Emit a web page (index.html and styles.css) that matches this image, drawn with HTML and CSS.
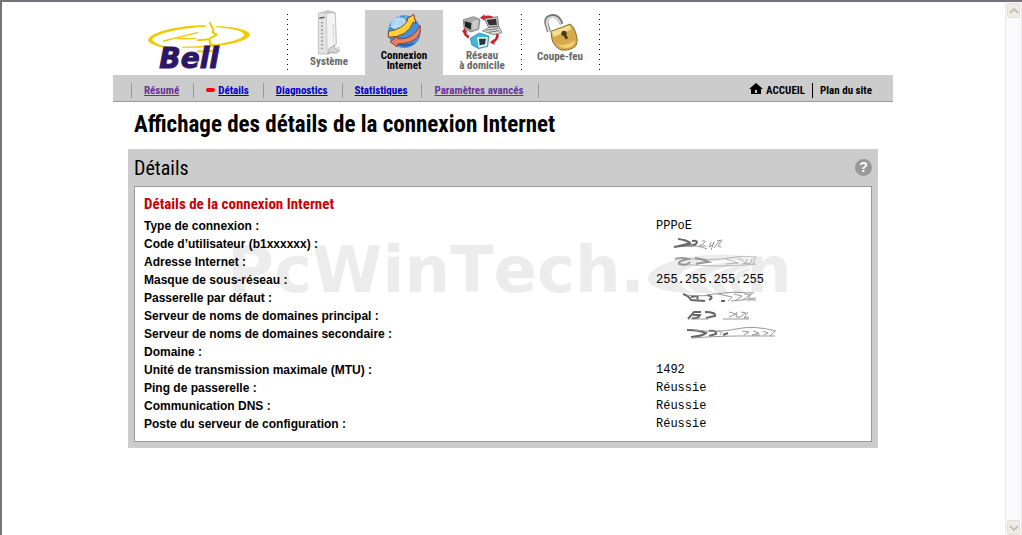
FILE: index.html
```html
<!DOCTYPE html>
<html lang="fr">
<head>
    <meta charset="UTF-8">
    <meta name="viewport" content="width=device-width, initial-scale=1.0">
    <title>Affichage des détails de la connexion Internet</title>
    <link rel="stylesheet" href="styles.css">
</head>
<body>

    <div class="page">
        <div class="container">
            <header class="top">
                <a href="#" class="logo" aria-label="Bell">
                    <svg width="107" height="50" viewBox="110 60 321 150">
                        <g fill="#edcb00">
                            <path d="M208 149 C160 147 113 133 113 119 C124 93 220 75 286 76 L286 81 C225 82 140 98 126 118 C128 132 168 142 208 145Z"/>
                            <path d="M318 78 C370 80 419 90 419 104 C410 130 300 146 214 143 L214 140 C300 140 394 124 402 105 C400 92 360 85 318 82Z"/>
                        </g>
                        <g fill="none" stroke="#edcb00" stroke-linecap="round" stroke-linejoin="round">
                            <path stroke-width="4" d="M160 123 L262 98 M202 116 L255 116"/>
                            <path stroke-width="6" d="M299 69 L309 90 L307 97 L319 104 L298 116 M262 121 L297 118 L300 132 L322 141 C322 151 305 157 262 154"/>
                        </g>
                        <text x="147" y="203" class="logo-text">Bell</text>
                    </svg>
                </a>
                <nav class="tabs">
                    <a href="#" class="tab tall">
                        <svg width="24" height="46" viewBox="115 28 72 138">
                            <path d="M140 158 L182 136 L184 150 L166 160Z" fill="#ddd"/>
                            <path d="M119 38 L148 30 L170 36 L173 130 L150 160 L119 160Z" fill="#e2e2e2" stroke="#aaa" stroke-width="2"/>
                            <path d="M143 36 L170 38 L172 128 L146 160Z" fill="#f3f3f3" stroke="#bbb" stroke-width="2"/>
                            <path d="M121 38 L148 30 L170 36 L143 39Z" fill="#c4c4c4"/>
                            <path d="M122 52 L138 50" stroke="#555" stroke-width="4"/>
                            <path d="M130 64 V152" stroke="#888" stroke-width="5" stroke-dasharray="4 7"/>
                            <path d="M164 70 V125" stroke="#ddd" stroke-width="4"/>
                            <path d="M148 160 L151 144 L166 134 L168 144 L182 152 L172 158 L160 153Z" fill="#d5d5d5" stroke="#999" stroke-width="2"/>
                        </svg>
                        <span>Système</span>
                    </a>
                    <a href="#" class="tab active">
                        <svg width="35" height="36" viewBox="318 42 105 108">
                            <circle cx="370" cy="95" r="49" fill="#4390dc"/>
                            <ellipse cx="356" cy="72" rx="27" ry="20" fill="#a9d4f8"/>
                            <path d="M340 56 Q365 66 398 56 M324 80 Q360 75 390 80 M356 48 Q335 85 345 120 M376 47 Q368 70 371 80" fill="none" stroke="#d8edff" stroke-width="2"/>
                            <path d="M340 130 Q375 150 403 128 Q380 135 340 130" fill="#2366b2"/>
                            <path d="M322 94 Q365 88 381 60 L373 60 L398 43 L405 70 L397 66 Q380 112 322 112Z" fill="#ffce38" stroke="#764b22" stroke-width="3"/>
                            <path d="M417 75 Q427 128 350 132 L348 141 L327 125 L351 109 L351 117 Q400 118 417 75Z" fill="#e9815f" stroke="#8e3e35" stroke-width="3"/>
                        </svg>
                        <span>Connexion<br>Internet</span>
                    </a>
                    <a href="#" class="tab plain">
                        <svg width="41" height="36" viewBox="62 40 123 108">
                            <g fill="none" stroke="#c7262d" stroke-width="8">
                                <path d="M154 51 Q139 46 128 51"/>
                                <path d="M69 89 Q69 104 83 110"/>
                                <path d="M168 100 Q171 116 151 126"/>
                            </g>
                            <path d="M116 51 L130 41 L130 60Z M62 94 L69 82 L80 96Z M146 126 L157 115 L160 132Z" fill="#c7262d"/>
                            <path d="M66 57 L96 48 L116 56 L112 86 L88 94 L68 82Z" fill="#aaa" stroke="#666" stroke-width="2"/>
                            <path d="M70 62 L90 67 L88 87 L71 78Z" fill="#222"/>
                            <path d="M93 62 L111 57 L109 83 L93 88Z" fill="#ccc"/>
                            <path d="M130 54 L169 48 L172 77 L141 80Z" fill="#c9c9c9" stroke="#555" stroke-width="2"/>
                            <path d="M136 58 L164 54 L167 73 L143 74Z" fill="#333"/>
                            <path d="M141 81 L173 78 L182 96 L156 102 L124 91Z" fill="#ddd" stroke="#555" stroke-width="2"/>
                            <path d="M134 89 L170 84 M142 95 L174 90" stroke="#777" stroke-width="3"/>
                            <path d="M87 113 L114 97 L143 106 L139 137 L112 144 L91 132Z" fill="#40b7dc" stroke="#1d7595" stroke-width="2"/>
                            <path d="M107 109 L139 109 L137 135 L112 141Z" fill="#e4f4f8"/>
                            <path d="M113 114 L134 114 L131 131 L115 134Z" fill="#223743"/>
                        </svg>
                        <span>Réseau<br>à domicile</span>
                    </a>
                    <a href="#" class="tab">
                        <svg width="35" height="37" viewBox="308 38 105 111">
                            <path d="M326 91 L318 65 Q316 47 336 44 Q353 42 364 68" fill="none" stroke="#777" stroke-width="12"/>
                            <path d="M326 91 L319 65 Q318 50 336 47 Q351 45 361 67" fill="none" stroke="#ddd" stroke-width="6"/>
                            <path d="M332 90 L390 68 Q406 82 410 112 Q412 132 400 139 Q376 151 358 144 Q332 130 332 90Z" fill="#d4aa4d" stroke="#8d6a2c" stroke-width="3"/>
                            <path d="M334 91 L387 72 Q391 77 394 84 L340 107Z" fill="#f4dd91"/>
                            <path d="M349 128 Q378 137 404 117 Q402 133 388 138 Q368 144 349 128Z" fill="#f1d174"/>
                            <circle cx="371" cy="96" r="8" fill="#49391f"/>
                            <path d="M371 98 L380 112" stroke="#49391f" stroke-width="8"/>
                        </svg>
                        <span>Coupe-feu</span>
                    </a>
                </nav>
            </header>

            <div class="subnav">
                <ul>
                    <li><a href="#" class="visited">Résumé</a></li>
                    <li class="current"><a href="#">Détails</a></li>
                    <li><a href="#">Diagnostics</a></li>
                    <li><a href="#">Statistiques</a></li>
                    <li><a href="#" class="visited">Paramètres avancés</a></li>
                </ul>
                <div class="tools">
                    <a href="#">
                        <svg width="14" height="12" viewBox="0 0 14 12"><path fill-rule="evenodd" d="M7 0 L14 6 H12 V11 H2 V6 H0Z M6 7 V10 H8 V7Z"/></svg>
                        ACCUEIL
                    </a>
                    <a href="#">Plan du site</a>
                </div>
            </div>

            <main>
                <h1>Affichage des détails de la connexion Internet</h1>
                <section class="panel">
                    <div class="panel-head">
                        <h2>Détails</h2>
                        <button type="button" class="help" aria-label="Aide">?</button>
                    </div>
                    <div class="panel-body">
                        <h3>Détails de la connexion Internet</h3>
                        <table>
                            <tr><th scope="row">Type de connexion :</th><td>PPPoE</td></tr>
                            <tr>
                                <th scope="row">Code d’utilisateur (b1xxxxxx) :</th>
                                <td>
                                    <svg class="scribble" width="130" height="14" viewBox="0 0 130 14">
                                        <path class="heavy" d="M22 2 Q31 3 34 6 Q29 8 18 10 Q32 8 40 8 M36 4 Q43 3 40 7 L35 9"/>
                                        <path d="M30 9 Q42 8 51 12 M46 4 Q52 3 47 7 L43 9 H50 M55 5 L53 10 Q58 8 58 5 L55 13 M64 3 L58 11 M61 4 L66 3 L62 9 L65 10"/>
                                    </svg>
                                </td>
                            </tr>
                            <tr>
                                <th scope="row">Adresse Internet :</th>
                                <td>
                                    <svg class="scribble" width="130" height="14" viewBox="0 0 130 14">
                                        <path class="heavy faded" d="M19 4 Q26 2 32 4 Q22 6 23 9 Q31 11 34 7 M39 3 Q47 4 53 7 Q43 8 40 9"/>
                                        <path class="faded" d="M25 3 Q58 6 72 3 T101 2 M24 9 Q60 13 100 9 M70 4 L82 8 L70 9 M82 3 L90 8 L86 9 M91 4 L90 9 L95 8 L96 4 M99 3 L97 10"/>
                                    </svg>
                                </td>
                            </tr>
                            <tr><th scope="row">Masque de sous-réseau :</th><td>255.255.255.255</td></tr>
                            <tr>
                                <th scope="row">Passerelle par défaut :</th>
                                <td>
                                    <svg class="scribble" width="130" height="14" viewBox="0 0 130 14">
                                        <path class="heavy" d="M27 3 Q33 5 35 9 L49 10 M35 6 Q44 4 41 8 M51 4 Q59 6 53 9 M65 10 H69"/>
                                        <path d="M31 4 Q48 6 58 3 Q78 0 98 2 M62 3 L76 6 L72 10 M78 3 L86 5 L79 10 M88 3 L94 4 L87 9 M96 2 L92 8 L100 7 M75 10 Q89 8 100 9"/>
                                    </svg>
                                </td>
                            </tr>
                            <tr>
                                <th scope="row">Serveur de noms de domaines principal :</th>
                                <td>
                                    <svg class="scribble" width="130" height="14" viewBox="0 0 130 14">
                                        <path class="heavy" d="M32 10 L38 3 L45 3 M37 6 H44 Q42 10 36 9 M49 3 Q60 3 59 7 L50 9"/>
                                        <path d="M35 10 H52 M67 10 H93 M73 3 L80 5 L73 8 M81 3 L80 8 H84 M85 3 L90 4 L84 8 M92 3 L88 9 L93 8"/>
                                    </svg>
                                </td>
                            </tr>
                            <tr>
                                <th scope="row">Serveur de noms de domaines secondaire :</th>
                                <td>
                                    <svg class="scribble" width="130" height="14" viewBox="0 0 130 14">
                                        <path class="heavy" d="M31 3 Q43 3 50 6 Q47 9 35 10 M53 4 Q61 3 60 7 L53 9 M72 6 L67 8"/>
                                        <path d="M38 3 Q62 6 80 2 T120 4 M35 11 Q65 9 83 9 T119 9 M61 4 Q68 4 64 8 M86 4 L93 5 L88 8 M97 4 L103 6 L96 8 H104 M107 4 L112 6 L108 8 M119 4 L114 9"/>
                                    </svg>
                                </td>
                            </tr>
                            <tr><th scope="row">Domaine :</th><td></td></tr>
                            <tr><th scope="row">Unité de transmission maximale (MTU) :</th><td>1492</td></tr>
                            <tr><th scope="row">Ping de passerelle :</th><td>Réussie</td></tr>
                            <tr><th scope="row">Communication DNS :</th><td>Réussie</td></tr>
                            <tr><th scope="row">Poste du serveur de configuration :</th><td>Réussie</td></tr>
                        </table>
                    </div>
                </section>
            </main>
        </div>
    </div>

    <!-- Disabled scrollbar -->
    <div class="scrollbar">
        <button type="button" disabled aria-label="Haut">
            <svg width="10" height="6" viewBox="0 0 10 6"><path d="M1 5 L5 1 L9 5"/></svg>
        </button>
        <button type="button" disabled aria-label="Bas">
            <svg width="10" height="6" viewBox="0 0 10 6"><path d="M1 1 L5 5 L9 1"/></svg>
        </button>
    </div>

    <!-- Watermark -->
    <div class="watermark">
        <svg width="562" height="52" viewBox="0 0 562 52">
            <text x="-3" y="50">PcWinTech.</text>
            <path d="M530 20 C510 10 480 12 460 15 C435 19 418 28 418 37 C419 46 438 51 463 51 H520 V24Z"/>
            <g class="gaps">
                <path d="M520 20 C485 15 452 24 448 36 C448 43 455 48 466 51 C458 45 455 38 460 32 C467 24 490 19 520 20Z"/>
                <path d="M522 22 C495 22 472 32 472 41 C473 46 480 49 487 51 C482 46 479 41 483 36 C488 28 505 23 522 22Z"/>
                <path d="M524 24 C507 26 491 36 492 43 L499 51 H505 C500 45 499 41 503 36 C507 30 515 26 524 24Z"/>
                <path d="M524 26 C513 31 507 38 509 44 L514 52 H524Z"/>
            </g>
            <text x="516" y="50">n</text>
        </svg>
    </div>

</body>
</html>
```

FILE: styles.css
```css
* {
    box-sizing: border-box;
}

body {
    margin: 0;
    min-height: 100vh;
    display: flex;
    font-family: "Liberation Sans", Arial, sans-serif;
    font-size: 12px;
    color: #000;
    background: #fff;
    border-top: 2px solid #747278;
    border-left: 2px solid #747278;
}

h1, h2, h3 {
    margin: 0;
}

h1, h2, h3, .tab, .subnav {
    font-family: "Roboto Condensed", Roboto, "Liberation Sans", sans-serif;
}

.page {
    flex: 1;
    padding-right: 1px;
}

.container {
    max-width: 780px;
    margin: 0 auto;
}

/* Header */
.top {
    display: flex;
    padding-top: 8px;
}

.logo {
    width: 174px;
    padding: 10px 0 0 34px;
}

.logo svg {
    overflow: visible;
}

.logo-text {
    font-family: "DejaVu Sans", sans-serif;
    font-size: 84px;
    font-weight: bold;
    font-style: italic;
    fill: #2e1666;
    stroke: #2e1666;
    stroke-width: 3px;
}

.tabs {
    display: flex;
    height: 65px;
}

.tab {
    position: relative;
    width: 78px;
    padding-top: 4px;
    display: flex;
    flex-direction: column;
    align-items: center;
    gap: 1px;
    font-size: 11px;
    line-height: 10px;
    font-weight: bold;
    text-align: center;
    text-decoration: none;
    color: #666;
}

.tab.tall {
    padding: 0 0 0 6px;
}

/* dotted separators between the tabs */
.tab::before,
.tab:last-child::after {
    content: "";
    position: absolute;
    left: 0;
    top: 4px;
    bottom: 4px;
    width: 1px;
    background: repeating-linear-gradient(#000 0 1px, transparent 1px 5px);
}

.tab:last-child::after {
    left: 100%;
}

.tab.active {
    color: #000;
    background: #ccc;
}

.tab.active::before,
.tab.plain::before {
    display: none;
}

/* Sub navigation */
.subnav {
    display: flex;
    justify-content: space-between;
    align-items: center;
    height: 27px;
    padding: 5px 21px 0 18px;
    background: #ccc;
    border-bottom: 1px solid #999;
    font-size: 11px;
    font-weight: bold;
    line-height: 15px;
}

.subnav ul {
    display: flex;
    list-style: none;
    margin: 0;
    padding: 0;
}

.subnav li {
    padding: 0 14px 0 12px;
    border-left: 1px solid #999;
}

.subnav li:last-child {
    border-right: 1px solid #999;
}

.subnav li a {
    color: #0000cc;
}

.subnav li a.visited {
    color: #663399;
}

.current::before {
    content: "";
    display: inline-block;
    width: 9px;
    height: 4px;
    margin-right: 3px;
    border-radius: 2px;
    background: #f00;
    vertical-align: 2px;
}

.tools {
    display: flex;
}

.tools a {
    color: #000;
    text-decoration: none;
}

.tools a + a {
    margin-left: 7px;
    padding-left: 7px;
    border-left: 1px solid #000;
}

.tools svg {
    margin-right: 1px;
    vertical-align: -1px;
}

/* Content */
main {
    padding: 0 15px;
}

h1 {
    padding: 8px 6px 9px;
    font-size: 23px;
    line-height: 30px;
}

.panel {
    padding: 0 6px 6px;
    background: #ccc;
}

.panel-head {
    display: flex;
    justify-content: space-between;
    align-items: center;
    height: 37px;
}

h2 {
    font-size: 20px;
    font-weight: normal;
}

.help {
    width: 17px;
    height: 17px;
    padding: 0;
    border: 0;
    border-radius: 50%;
    background: #999;
    color: #fff;
    font: bold 14px/17px "Liberation Sans", sans-serif;
}

.panel-body {
    padding: 8px 9px;
    background: #fff;
    border: 1px solid #999;
}

h3 {
    font-size: 15px;
    line-height: 18px;
    padding-bottom: 4px;
    color: #c00;
}

table {
    width: 100%;
    table-layout: fixed;
    border-collapse: collapse;
}

th, td {
    height: 18px;
    padding: 0;
    line-height: 18px;
    text-align: left;
}

th {
    width: 512px;
}

td {
    font-family: "Liberation Mono", "Courier New", monospace;
}

.scribble {
    display: block;
    fill: none;
    stroke: #999;
    stroke-width: 1;
}

.scribble .heavy {
    stroke: #666;
    stroke-width: 2;
}

.scribble .faded {
    opacity: 0.6;
}

/* Scrollbar */
.scrollbar {
    width: 17px;
    display: flex;
    flex-direction: column;
    justify-content: space-between;
    padding: 1px 1px 0;
    background: #fafafc;
    border-left: 1px solid #e8e8ea;
    border-right: 1px solid #e8e8ea;
}

.scrollbar button {
    height: 15px;
    padding: 0;
    display: flex;
    align-items: center;
    justify-content: center;
    background: #eeede5;
    border: 1px solid #e2e1d8;
    border-radius: 2px;
}

.scrollbar path {
    fill: none;
    stroke: #c4c3bb;
    stroke-width: 2;
}

/* multiply keeps the rows readable under the watermark */
.watermark {
    position: fixed;
    inset: 0;
    display: flex;
    align-items: center;
    justify-content: center;
    pointer-events: none;
    mix-blend-mode: multiply;
}

.watermark svg {
    fill: #ececec;
    overflow: visible;
}

.watermark .gaps {
    fill: #fff;
}

.watermark text {
    font-family: "DejaVu Sans", sans-serif;
    font-size: 64px;
    font-weight: bold;
    font-kerning: none;
}
```
